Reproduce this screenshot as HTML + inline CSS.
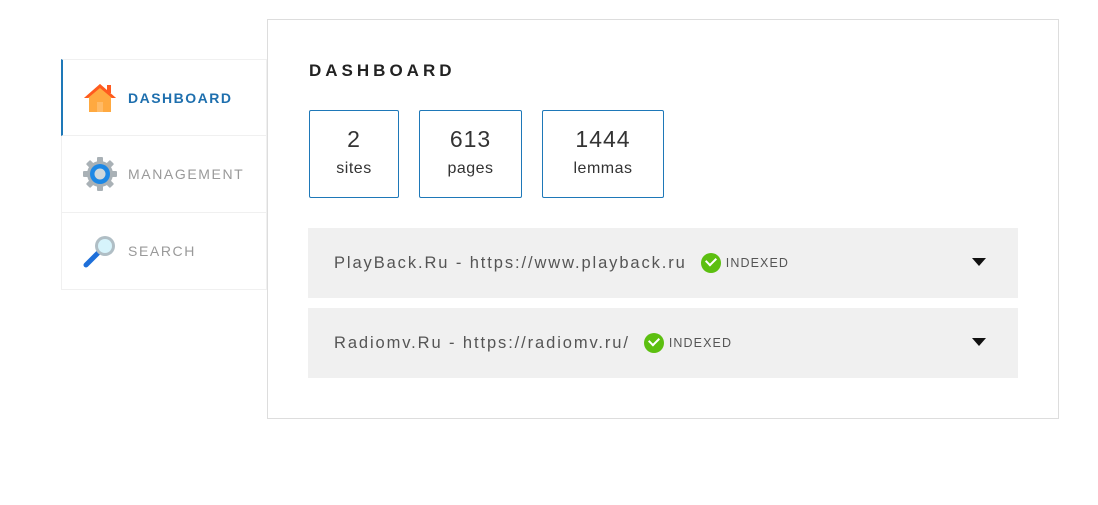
<!DOCTYPE html>
<html><head><style>
*{margin:0;padding:0;box-sizing:border-box}
body{width:1098px;height:505px;background:#fff;font-family:"Liberation Sans",sans-serif;position:relative;overflow:hidden}
.side{position:absolute;left:61px;top:59px;width:206px}
.item{height:77px;border:1px solid #f0f0f0;border-top:none;display:flex;align-items:center;padding-left:20px;font-size:14px;letter-spacing:1.6px;color:#999}
.item:first-child{border-top:1px solid #f0f0f0;border-left:2px solid #1e78b8;color:#1e6fae;font-weight:bold;padding-left:19px;letter-spacing:1.5px}
.item svg{margin-right:10px}
.main{position:absolute;left:267px;top:19px;width:792px;height:400px;border:1px solid #ddd}
h1{position:absolute;left:41px;top:41px;font-size:17px;letter-spacing:4px;color:#222;font-weight:bold}
.stat{position:absolute;top:90px;height:88px;border:1px solid #1e78b8;border-radius:2px;text-align:center;color:#333}
.stat b{display:block;font-weight:normal;font-size:23px;margin-top:15px;letter-spacing:1px}
.stat span{display:block;font-size:16px;margin-top:7px;letter-spacing:.5px}
.row{position:absolute;left:40px;width:710px;height:70px;background:#f0f0f0;display:flex;align-items:center;padding-left:26px;color:#555;font-size:16.5px;letter-spacing:1.9px}
.ok{display:flex;align-items:center;font-size:12.5px;letter-spacing:1.1px;margin-left:14px;color:#555}
.ok i{display:inline-block;width:20px;height:20px;border-radius:50%;background:#5cbf10;margin-right:5px;position:relative}
.ok i:after{content:"";position:absolute;left:5px;top:4px;width:8px;height:5px;border-left:2.5px solid #fff;border-bottom:2.5px solid #fff;transform:rotate(-45deg)}
.arr{position:absolute;right:32px;top:30px;border-left:7px solid transparent;border-right:7px solid transparent;border-top:8px solid #111}
</style></head><body>
<div class="side">
<div class="item"><svg width="36" height="32" viewBox="0 0 36 32"><polygon points="18,2 2,16 7,16 7,30 29,30 29,16 34,16" fill="#ffa940"/><polygon points="18,2 2,16 6,16 18,6 30,16 34,16" fill="#ff5a1f"/><rect x="25" y="3" width="4" height="8" fill="#ff5a1f"/><rect x="15" y="20" width="6" height="10" fill="#fff3"/></svg>DASHBOARD</div>
<div class="item"><svg width="36" height="36" viewBox="0 0 36 36"><g fill="#a9b1b6"><circle cx="18" cy="18" r="13"/><rect x="15" y="1" width="6" height="34" rx="1"/><rect x="1" y="15" width="34" height="6" rx="1"/><rect x="15" y="1" width="6" height="34" rx="1" transform="rotate(45 18 18)"/><rect x="15" y="1" width="6" height="34" rx="1" transform="rotate(-45 18 18)"/></g><circle cx="18" cy="18" r="10" fill="#1e88e5"/><circle cx="18" cy="18" r="5.5" fill="#cfd8dc"/></svg>MANAGEMENT</div>
<div class="item"><svg width="36" height="36" viewBox="0 0 36 36"><line x1="4" y1="32" x2="16" y2="20" stroke="#1e6fd9" stroke-width="5" stroke-linecap="round"/><circle cx="23" cy="13" r="10" fill="#b0bec5"/><circle cx="23" cy="13" r="7" fill="#d6f3fb"/></svg>SEARCH</div>
</div>
<div class="main">
<h1>DASHBOARD</h1>
<div class="stat" style="left:41px;width:90px"><b>2</b><span>sites</span></div>
<div class="stat" style="left:151px;width:103px"><b>613</b><span>pages</span></div>
<div class="stat" style="left:274px;width:122px"><b>1444</b><span>lemmas</span></div>
<div class="row" style="top:208px">PlayBack.Ru - https://www.playback.ru<span class="ok"><i></i>INDEXED</span><div class="arr"></div></div>
<div class="row" style="top:288px">Radiomv.Ru - https://radiomv.ru/<span class="ok"><i></i>INDEXED</span><div class="arr"></div></div>
</div>
</body></html>
